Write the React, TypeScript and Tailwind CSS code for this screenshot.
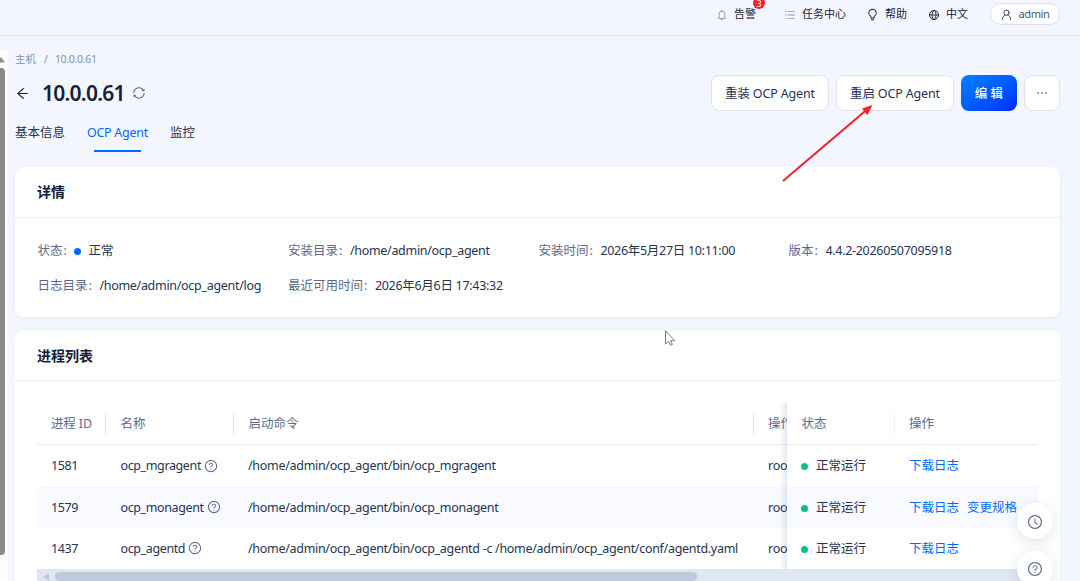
import type { ReactNode } from 'react';
import {
  AiOutlineArrowLeft,
  AiOutlineBell,
  AiOutlineBulb,
  AiOutlineClockCircle,
  AiOutlineEllipsis,
  AiOutlineQuestionCircle,
  AiOutlineSync,
  AiOutlineUnorderedList
} from 'react-icons/ai';

interface AgentProcess {
  pid: number;
  name: string;
  command: string;
  user: string;
  actions: string[];
}

const processes: AgentProcess[] = [
  {
    pid: 1581,
    name: 'ocp_mgragent',
    command: '/home/admin/ocp_agent/bin/ocp_mgragent',
    user: 'root',
    actions: ['下载日志']
  },
  {
    pid: 1579,
    name: 'ocp_monagent',
    command: '/home/admin/ocp_agent/bin/ocp_monagent',
    user: 'root',
    actions: ['下载日志', '变更规格']
  },
  {
    pid: 1437,
    name: 'ocp_agentd',
    command: '/home/admin/ocp_agent/bin/ocp_agentd -c /home/admin/ocp_agent/conf/agentd.yaml',
    user: 'root',
    actions: ['下载日志']
  }
];

const GlobeIcon = ({ className }: { className?: string }) => (
  <svg className={className} viewBox="0 0 12 12" fill="none" stroke="currentColor">
    <circle cx="6" cy="6" r="4.5" />
    <ellipse cx="6" cy="6" rx="2" ry="4.5" strokeWidth="0.9" />
    <path d="M1.5 6 H10.5" strokeWidth="0.9" />
  </svg>
);

const UserIcon = ({ className }: { className?: string }) => (
  <svg className={className} viewBox="0 0 12 12" fill="none" stroke="currentColor" strokeLinecap="round">
    <circle cx="6" cy="4" r="2.9" />
    <path d="M1.4 11.2 C1.6 8.8 3 7.3 4.6 6.6 M10.6 11.2 C10.4 8.8 9 7.3 7.4 6.6" />
  </svg>
);

const TopBar = () => (
  <header className="flex h-9 shrink-0 items-center justify-end border-b border-[#dfe5f0] pb-[7px] pr-5 text-[11px] text-[#1c2434]">
    <div className="relative flex items-center pt-px">
      <AiOutlineBell className="mr-[6px] h-3 w-3 text-[#8592ad]" />
      <span>告警</span>
      <span className="absolute -top-2 right-[-9px] flex h-3 w-3 items-center justify-center rounded-full bg-[#f5222d] text-[9px] leading-none text-white">
        3
      </span>
    </div>
    <div className="ml-7 flex items-center pt-px">
      <AiOutlineUnorderedList className="mr-[6px] h-3 w-3 text-[#8592ad]" />
      <span>任务中心</span>
    </div>
    <div className="ml-5 flex items-center pt-px">
      <AiOutlineBulb className="mr-[6px] h-[13px] w-[13px]" />
      <span>帮助</span>
    </div>
    <div className="ml-[21px] flex items-center pt-px">
      <GlobeIcon className="mr-[6px] h-3 w-3" />
      <span>中文</span>
    </div>
    <div className="ml-[22px] flex h-[22px] w-[70px] items-center justify-center rounded-full border border-[#dde3ee] bg-white text-[#4a5468]">
      <UserIcon className="mr-[7px] h-[11px] w-[11px] text-[#26344f]" />
      <span className="tracking-[-0.4px]">admin</span>
    </div>
  </header>
);

const PageScrollbar = () => (
  <div className="mt-[14px] flex w-2 shrink-0 flex-col bg-[#fcfcfc]">
    <svg className="h-[18px] w-2" viewBox="0 0 8 18" fill="#8b8b8b">
      <path d="M-3 12.5 L1 7 L5 12.5 Z" />
    </svg>
    <div className="h-[487px] w-[5px] rounded-r bg-[#8b8b8b]" />
  </div>
);

const PageHeader = () => (
  <div>
    <div className="flex h-4 items-center gap-2 text-[10.5px] text-[#8592ad]">
      <span>主机</span>
      <span>/</span>
      <span className="-ml-px tracking-[-0.3px]">10.0.0.61</span>
    </div>
    <div className="mt-[7px] flex h-9 items-center">
      <AiOutlineArrowLeft className="h-[15px] w-[15px] text-[#132039]" />
      <h1 className="ml-3 pt-px text-[21px] font-semibold tracking-[-0.75px] text-[#132039]">10.0.0.61</h1>
      <AiOutlineSync className="ml-[7px] h-[14px] w-[14px] text-[#5c6b8a]" />
      <div className="ml-auto flex gap-[7px] text-[12.5px] text-[#26344f]">
        <button className="h-9 w-[118px] rounded-lg border border-[#dde3ee] bg-white pt-0.5 tracking-[-0.15px]">
          重装 OCP Agent
        </button>
        <button className="h-9 w-[118px] rounded-lg border border-[#dde3ee] bg-white pt-0.5 tracking-[-0.15px]">
          重启 OCP Agent
        </button>
        <button className="h-9 w-14 rounded-lg bg-linear-to-br from-[#0080ff] to-[#0024ff] pt-0.5 font-medium text-white">
          编 辑
        </button>
        <button className="flex h-9 w-9 items-center justify-center rounded-lg border border-[#dde3ee] bg-white">
          <AiOutlineEllipsis className="h-[14px] w-[14px]" />
        </button>
      </div>
    </div>
    <nav className="mt-2 flex h-[34px] gap-[22px] text-[12.5px] leading-7 text-[#26344f]">
      <span>基本信息</span>
      <div className="flex flex-col items-center text-[#006aff]">
        <span className="tracking-[-0.28px]">OCP Agent</span>
        <span className="mt-[3px] h-[2px] w-[47px] bg-[#006aff]" />
      </div>
      <span>监控</span>
    </nav>
  </div>
);

const DetailItem = ({ label, children }: { label: string; children: ReactNode }) => (
  <div className="flex items-center whitespace-nowrap">
    <span className="text-[#5c6b8a]">{label}</span>
    <span className="mr-[7.5px] ml-px text-[#5c6b8a]">:</span>
    {children}
  </div>
);

const DetailCard = () => (
  <section className="mt-[14px] h-[150px] shrink-0 rounded-lg bg-white shadow-[0_1px_3px_rgba(30,50,100,0.08)]">
    <h2 className="flex h-[51px] items-center border-b border-[#e9edf5] px-[22px] pb-px text-[14px] font-bold text-[#132039]">
      详情
    </h2>
    <div className="grid grid-cols-[250.5px_250.5px_250px_1fr] gap-y-[17px] px-[22.5px] pt-6 text-[12.5px] leading-[18px] text-[#26344f]">
      <DetailItem label="状态">
        <span className="mr-[7px] h-[7px] w-[7px] rounded-full bg-[#006aff]" />
        <span>正常</span>
      </DetailItem>
      <DetailItem label="安装目录">
        <span className="tracking-[-0.3px]">/home/admin/ocp_agent</span>
      </DetailItem>
      <DetailItem label="安装时间">
        <span className="tracking-[-0.3px]">2026年5月27日 10:11:00</span>
      </DetailItem>
      <DetailItem label="版本">
        <span className="tracking-[-0.3px]">4.4.2-20260507095918</span>
      </DetailItem>
      <DetailItem label="日志目录">
        <span className="tracking-[-0.3px]">/home/admin/ocp_agent/log</span>
      </DetailItem>
      <DetailItem label="最近可用时间">
        <span className="tracking-[-0.3px]">2026年6月6日 17:43:32</span>
      </DetailItem>
    </div>
  </section>
);

const ProcessTable = () => (
  <div className="mx-[22px] mt-[22px] text-[12.5px] text-[#26344f]">
    <div className="flex">
      {/* Scrollable columns */}
      <div className="w-[750px] overflow-hidden whitespace-nowrap">
        <div className="grid h-[42px] grid-cols-[69px_128px_519.5px_80px] items-center border-b border-[#e9edf5] text-[#5c6b8a]">
          <span className="border-r border-[#dfe5f0] pl-[14px] leading-5 tracking-[-0.15px]">进程 ID</span>
          <span className="border-r border-[#dfe5f0] pl-[14.5px] leading-5">名称</span>
          <span className="border-r border-[#dfe5f0] pl-[14.5px] leading-5">启动命令</span>
          <span className="pl-[14.5px] leading-5">操作用户</span>
        </div>
        {processes.map((item, index) => (
          <div
            key={item.pid}
            className={`grid h-[41.4px] grid-cols-[69px_128px_519.5px_80px] items-center pt-0.5 ${index === 1 ? 'bg-[#f8faff]' : 'bg-white'}`}
          >
            <span className="pl-[14px] tracking-[-0.4px]">{item.pid}</span>
            <span className="flex items-center gap-[3px] pl-[14.5px] tracking-[-0.38px]">
              {item.name}
              <AiOutlineQuestionCircle className="mb-0.5 h-[14px] w-[14px] text-[#5c6b8a]" />
            </span>
            <span className="pl-[14px] tracking-[-0.3px]">{item.command}</span>
            <span className="pl-[14.5px] tracking-[-0.28px]">{item.user}</span>
          </div>
        ))}
      </div>

      {/* Columns fixed to the right edge */}
      <div className="relative w-[251px] whitespace-nowrap">
        <div className="absolute inset-y-0 -left-2 w-2 bg-linear-to-l from-[#4668b0]/15 to-transparent" />
        <div className="grid h-[42px] grid-cols-[107.5px_1fr] items-center border-b border-[#e9edf5] text-[#5c6b8a]">
          <span className="border-r border-[#e9edf5] pl-[14.5px] leading-5">状态</span>
          <span className="pl-[14.5px] leading-5">操作</span>
        </div>
        {processes.map((item, index) => (
          <div
            key={item.pid}
            className={`grid h-[41.4px] grid-cols-[107.5px_1fr] items-center pt-0.5 ${index === 1 ? 'bg-[#f8faff]' : 'bg-white'}`}
          >
            <span className="flex items-center gap-[8px] pl-[14px]">
              <span className="h-[7px] w-[7px] rounded-full bg-[#0ac185]" />
              正常运行
            </span>
            <span className="flex gap-2 pl-[14.5px] text-[#006aff]">
              {item.actions.map((action) => (
                <a key={action}>{action}</a>
              ))}
            </span>
          </div>
        ))}
      </div>
    </div>

    {/* Horizontal scrollbar */}
    <div className="flex h-4 items-start bg-[#e0e6f2] pt-[3px]">
      <svg className="mt-[1px] h-2 w-[18px]" viewBox="0 0 18 8" fill="#bfc9de">
        <path d="M12 0 L6 4 L12 8 Z" />
      </svg>
      <div className="h-[9px] w-[642px] rounded-full bg-[#bfc9de]" />
    </div>
  </div>
);

const FloatingActions = () => (
  <div className="absolute left-[1017px] top-[503px] flex flex-col gap-3 text-[#5c6b8a]">
    <button className="flex h-9 w-9 items-center justify-center rounded-full bg-white pt-px shadow-[0_3px_14px_rgba(30,50,100,0.14)]">
      <AiOutlineClockCircle className="h-4 w-4" />
    </button>
    <button className="flex h-9 w-9 items-center justify-center rounded-full bg-white shadow-[0_3px_14px_rgba(30,50,100,0.14)]">
      <AiOutlineQuestionCircle className="h-4 w-4" />
    </button>
  </div>
);

const App = () => {
  return (
    <div className="relative flex h-[581px] w-[1080px] flex-col overflow-hidden bg-[#f3f6fe] font-['Noto_Sans','Noto_Sans_CJK_SC',sans-serif]">
      <TopBar />
      <div className="flex min-h-0 flex-1">
        <PageScrollbar />
        <main className="ml-[7px] mr-5 flex min-w-0 flex-1 flex-col pt-4">
          <PageHeader />
          <DetailCard />
          <section className="mt-[14px] shrink-0 rounded-t-lg bg-white">
            <h2 className="flex h-[50px] items-center border-b border-[#e9edf5] px-[22px] text-[14px] font-bold text-[#132039]">
              进程列表
            </h2>
            <ProcessTable />
          </section>
        </main>
      </div>
      <FloatingActions />

      {/* Arrow pointing at the restart button */}
      <svg className="absolute left-[778px] top-[100px] h-[86px] w-[100px]" viewBox="0 0 100 86">
        <path d="M5 81 L89 9.5" stroke="#f0202b" strokeWidth="2" fill="none" />
        <path d="M94.5 5 L84 8.5 L89.5 15 Z" fill="#f0202b" />
      </svg>

      {/* Mouse pointer */}
      <svg className="absolute left-[664px] top-[330px] h-[17px] w-3" viewBox="0 0 12 17">
        <path
          d="M1.5 0.8 V14 L4.6 11.3 L6.6 15.3 L8.4 14.5 L6.7 10.7 H10.8 Z"
          fill="#fff"
          stroke="#555a63"
          strokeWidth="0.8"
        />
      </svg>
    </div>
  );
};

export default App;
